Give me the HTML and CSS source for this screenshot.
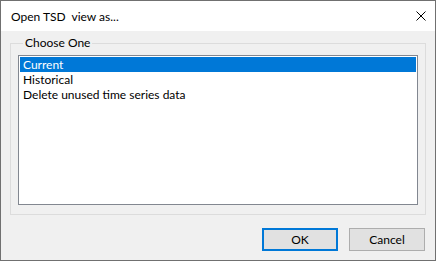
FILE: index.html
```html
<!DOCTYPE html>
<html>
<head>
<meta charset="utf-8">
<link rel="stylesheet" href="styles.css">
</head>
<body>
<div class="window">
  <div class="titlebar">
    <span class="title">Open TSD&nbsp; view as...</span>
    <svg class="close" width="10" height="10" viewBox="0 0 10 10">
      <path d="M0.5 0.5 L9.5 9.5 M9.5 0.5 L0.5 9.5" stroke="#000" stroke-width="1" fill="none"/>
    </svg>
  </div>
  <div class="content">
    <fieldset class="group">
      <legend class="legend">Choose One</legend>
      <div class="listbox">
        <div class="item selected">Current</div>
        <div class="item">Historical</div>
        <div class="item">Delete unused time series data</div>
      </div>
    </fieldset>
    <div class="buttons">
      <button class="btn default">OK</button>
      <button class="btn">Cancel</button>
    </div>
  </div>
</div>
</body>
</html>
```
FILE: styles.css
```css
html, body {
  margin: 0;
  padding: 0;
  background: #ffffff;
}
body {
  font-family: Lato, "Noto Sans", sans-serif;
  font-size: 12px;
  color: #000;
}
.window {
  width: 436px;
  height: 261px;
  box-sizing: border-box;
  border: 1px solid #707070;
  display: flex;
  flex-direction: column;
  background: #f0f0f0;
}
.titlebar {
  height: 30px;
  flex: none;
  background: #ffffff;
  display: flex;
  align-items: center;
  justify-content: space-between;
  padding: 0 9px 0 10px;
}
.title {
  line-height: 16px;
  white-space: pre;
  margin-top: 1px;
}
.close {
  display: block;
  margin-top: -1px;
}
.content {
  flex: 1;
  display: flex;
  flex-direction: column;
  padding: 4px 9px 0 9px;
}
.group {
  margin: 0;
  border: 1px solid #dcdcdc;
  padding: 4px 7px 9px 7px;
  min-width: 0;
}
.legend {
  padding: 0 2px;
  margin-left: 5px;
  line-height: 16px;
}
.listbox {
  height: 150px;
  box-sizing: border-box;
  border: 1px solid #828790;
  background: #ffffff;
  padding: 1px;
}
.item {
  height: 15px;
  line-height: 15px;
  padding-left: 3px;
  white-space: nowrap;
}
.item.selected {
  background: #0078d7;
  color: #ffffff;
}
.buttons {
  display: flex;
  justify-content: flex-end;
  gap: 11px;
  margin-top: 13px;
  padding-right: 1px;
}
.btn {
  width: 76px;
  height: 23px;
  box-sizing: border-box;
  background: #e1e1e1;
  border: 1px solid #adadad;
  font-family: Lato, "Noto Sans", sans-serif;
  font-size: 12px;
  color: #000;
  padding: 0;
  margin: 0;
}
.btn.default {
  border: 2px solid #0078d7;
}
```
